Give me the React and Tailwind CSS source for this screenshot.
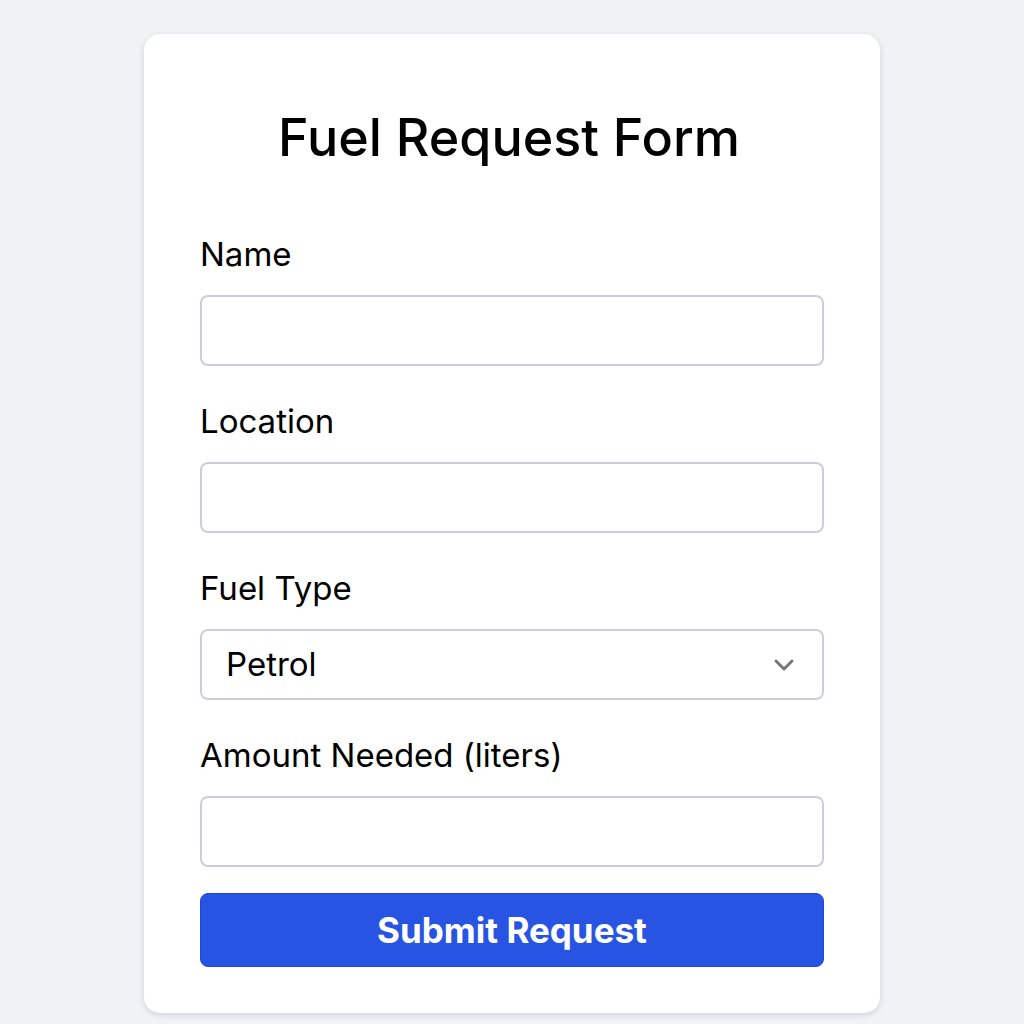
import React from "react";

function Field({ label, children }) {
  return (
    <div className="flex flex-col">
      <label className="text-[33px] leading-[36px] text-black mb-[23px]">{label}</label>
      {children}
    </div>
  );
}

export default function App() {
  return (
    <div className="min-h-screen w-full bg-[#f1f2f6] flex justify-center pt-[34px]" style={{ fontFamily: "Inter, 'Noto Sans', sans-serif" }}>
      <div className="w-[736px] h-[979px] bg-white rounded-[16px] shadow-[0_2px_6px_rgba(60,64,90,0.18)] px-[56px] pt-[72px]">
        <h1 className="text-center text-[52px] leading-[64px] font-medium text-black mb-[66px] pr-[6px]">Fuel Request Form</h1>
        <div className="flex flex-col gap-[37px]">
          <Field label="Name">
            <input className="h-[71px] w-full rounded-[8px] border-2 border-[#cbcddd] bg-white outline-none" />
          </Field>
          <Field label="Location">
            <input className="h-[71px] w-full rounded-[8px] border-2 border-[#cbcddd] bg-white outline-none" />
          </Field>
          <Field label="Fuel Type">
            <div className="h-[71px] w-full rounded-[8px] border-2 border-[#cbcddd] bg-white flex items-center justify-between pl-[24px] pr-[27px]">
              <span className="text-[33px] text-black">Petrol</span>
              <svg width="22" height="14" viewBox="0 0 22 14" fill="none">
                <path d="M3 3 L11 11 L19 3" stroke="#777" strokeWidth="3" strokeLinecap="round" strokeLinejoin="round" />
              </svg>
            </div>
          </Field>
          <div className="flex flex-col">
            <label className="text-[33px] leading-[36px] text-black mb-[23px]">Amount Needed (liters)</label>
            <input className="h-[71px] w-full rounded-[8px] border-2 border-[#cbcddd] bg-white outline-none" />
            <button className="mt-[26px] h-[74px] w-full rounded-[8px] bg-[#2754e3] border border-[#1d46d6] text-white text-[35px] font-bold">Submit Request</button>
          </div>
        </div>
      </div>
    </div>
  );
}
